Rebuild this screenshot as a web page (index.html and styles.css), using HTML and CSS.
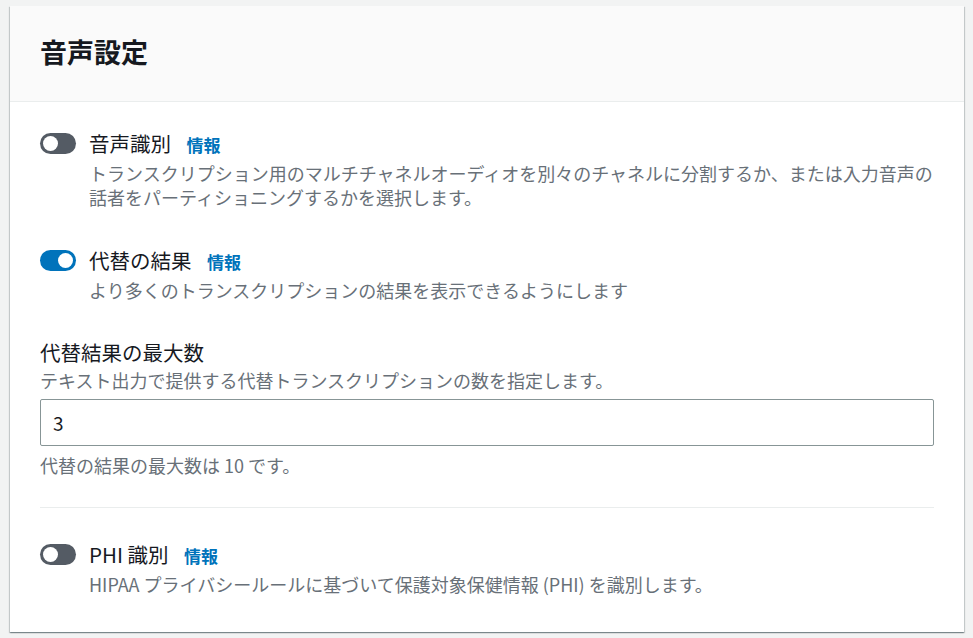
FILE: index.html
```html
<!DOCTYPE html>
<html lang="ja">
<head>
  <meta charset="UTF-8" />
  <title>音声設定</title>
  <link rel="stylesheet" href="styles.css">
</head>
<body>

  <div class="panel">
    <div class="panel-header">
      <h2>音声設定</h2>
    </div>

    <div class="panel-body">
      <!-- 音声識別 -->
      <div class="toggle-row">
        <span class="toggle"></span>
        <div class="toggle-text">
          <div class="label">音声識別 <a class="info" href="#">情報</a></div>
          <div class="desc">トランスクリプション用のマルチチャネルオーディオを別々のチャネルに分割するか、または入力音声の話者をパーティショニングするかを選択します。</div>
        </div>
      </div>

      <!-- 代替の結果 -->
      <div class="toggle-row second">
        <span class="toggle on"></span>
        <div class="toggle-text">
          <div class="label">代替の結果 <a class="info" href="#">情報</a></div>
          <div class="desc">より多くのトランスクリプションの結果を表示できるようにします</div>
        </div>
      </div>

      <div class="field">
        <div class="field-label">代替結果の最大数</div>
        <div class="desc">テキスト出力で提供する代替トランスクリプションの数を指定します。</div>
        <input class="input" type="text" value="3">
        <div class="desc constraint">代替の結果の最大数は 10 です。</div>
      </div>

      <hr class="divider">

      <div class="toggle-row">
        <span class="toggle"></span>
        <div class="toggle-text">
          <div class="label">PHI 識別 <a class="info" href="#">情報</a></div>
          <div class="desc">HIPAA プライバシールールに基づいて保護対象保健情報 (PHI) を識別します。</div>
        </div>
      </div>
    </div>
  </div>

</body>
</html>
```

FILE: styles.css
```css
body {
  margin: 0;
  padding: 6px 9px 6px 10px;
  background: #f2f3f3;
  font-family: "Noto Sans CJK JP", "Noto Sans", sans-serif;
  color: #16191f;
}

.panel {
  background: #fff;
  height: 626px;
  box-shadow: 0 1px 1px 0 rgba(0, 28, 36, 0.3),
              1px 1px 1px 0 rgba(0, 28, 36, 0.15),
              -1px 1px 1px 0 rgba(0, 28, 36, 0.15);
}

.panel-header {
  background: #fafafa;
  border-bottom: 1px solid #eaeded;
  padding: 30px 30px 33px;
}

.panel-header h2 {
  margin: 0;
  font-size: 27px;
  line-height: 32px;
  font-weight: bold;
}

.panel-body {
  padding: 27px 30px 0;
}

.toggle-row {
  display: flex;
  gap: 13px;
}

.toggle-row.second {
  margin-top: 37px;
}

.toggle {
  flex: none;
  position: relative;
  width: 36px;
  height: 21px;
  margin-top: 4px;
  border-radius: 11px;
  background: #545b64;
}

.toggle::after {
  content: "";
  position: absolute;
  top: 3px;
  left: 3px;
  width: 15px;
  height: 15px;
  border-radius: 50%;
  background: #fff;
}

.toggle.on {
  background: #0073bb;
}

.toggle.on::after {
  left: 18px;
}

.label {
  font-size: 20.5px;
  line-height: 28px;
}

.info {
  margin-left: 11px;
  font-size: 17px;
  font-weight: bold;
  color: #0073bb;
  text-decoration: none;
}

.desc {
  font-size: 18px;
  line-height: 24px;
  color: #687078;
  margin-top: 2px;
}

.field {
  margin-top: 36px;
}

.field-label {
  font-size: 20.5px;
  line-height: 28px;
}

.input {
  display: block;
  box-sizing: border-box;
  width: 100%;
  height: 47px;
  margin-top: 7px;
  padding: 0 12px;
  border: 1px solid #879596;
  border-radius: 2px;
  font-family: inherit;
  font-size: 19px;
  color: #16191f;
}

.constraint {
  margin-top: 7px;
}

.divider {
  margin: 30px 0 32px;
  border: none;
  border-top: 1px solid #eaeded;
}
```
